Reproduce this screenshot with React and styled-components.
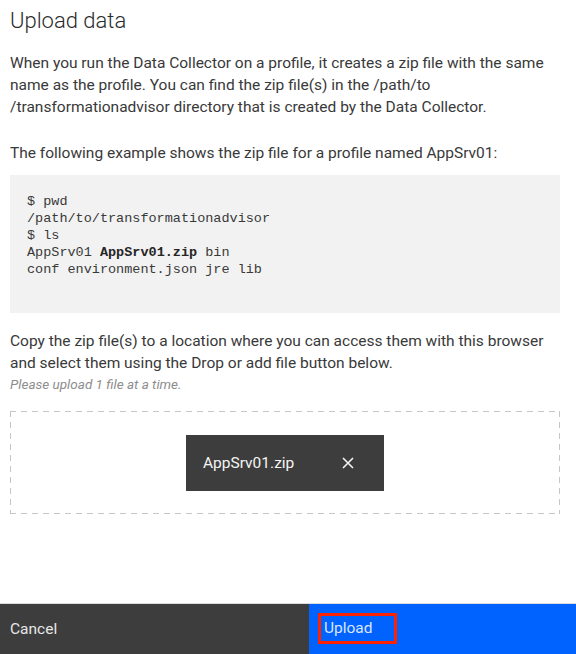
import React from "react";
import styled, { createGlobalStyle } from "styled-components";

const Global = createGlobalStyle`
  html, body { margin: 0; padding: 0; background: #fff; }
  body { font-family: "Roboto", "Noto Sans", sans-serif; color: #393939; }
  * { box-sizing: border-box; }
`;

const Page = styled.div`
  width: 576px;
  height: 654px;
  display: flex;
  flex-direction: column;
  background: #fff;
`;

const Content = styled.div`
  flex: 1;
  padding: 7px 16px 0 10px;
  display: flex;
  flex-direction: column;
`;

const Title = styled.h2`
  margin: 0;
  font-size: 22px;
  line-height: 28px;
  font-weight: 300;
  color: #2b2b2b;
`;

const Para = styled.p`
  margin: ${(p) => p.$mt || 0}px 0 0;
  font-size: 15.5px;
  line-height: 22px;
  font-weight: 400;
  color: #393939;
`;

const Note = styled.p`
  margin: 0;
  font-size: 13.5px;
  line-height: 20px;
  font-style: italic;
  color: #8d8d8d;
`;

const CodeBlock = styled.pre`
  margin: 11px 0 0;
  width: 550px;
  height: 138px;
  padding: 18px 17px 0;
  background: #f2f2f2;
  font-family: "Liberation Mono", "DejaVu Sans Mono", monospace;
  font-size: 13.5px;
  line-height: 17px;
  color: #393939;
`;

const CodeLine = styled.span`
  display: block;
`;

const Bold = styled.b`
  font-weight: 700;
  color: #262626;
`;

const DropZone = styled.div`
  margin-top: 17px;
  width: 550px;
  height: 103px;
  display: flex;
  align-items: center;
  justify-content: center;
  background-image:
    repeating-linear-gradient(90deg, #c6c6c6 0 6px, transparent 6px 11px),
    repeating-linear-gradient(90deg, #c6c6c6 0 6px, transparent 6px 11px),
    repeating-linear-gradient(180deg, #c6c6c6 0 6px, transparent 6px 11px),
    repeating-linear-gradient(180deg, #c6c6c6 0 6px, transparent 6px 11px);
  background-size: 100% 1px, 100% 1px, 1px 100%, 1px 100%;
  background-position: 0 0, 0 100%, 0 0, 100% 0;
  background-repeat: no-repeat;
`;

const FileChip = styled.div`
  width: 198px;
  height: 56px;
  background: #3d3d3d;
  display: flex;
  align-items: center;
  justify-content: space-between;
  padding: 0 29px 0 17px;
  color: #f4f4f4;
  font-size: 15.5px;
`;

const CloseBtn = styled.button`
  border: 0;
  background: transparent;
  padding: 0;
  width: 14px;
  height: 14px;
  display: flex;
  color: #f4f4f4;
  cursor: pointer;
`;

const Footer = styled.div`
  height: 51px;
  display: flex;
  border-top: 1px solid #dcdcdc;
`;

const FooterButton = styled.button`
  flex: ${(p) => (p.$primary ? "0 0 267px" : "1")};
  border: 0;
  margin: 0;
  background: ${(p) => (p.$primary ? "#0062ff" : "#3d3d3d")};
  color: ${(p) => (p.$primary ? "#dbe6ff" : "#e6e6e6")};
  font-family: "Roboto", "Noto Sans", sans-serif;
  font-size: 15.5px;
  text-align: left;
  padding: 0 10px;
  display: flex;
  align-items: center;
  cursor: pointer;
`;

const FocusLabel = styled.span`
  display: inline-flex;
  align-items: center;
  height: 31px;
  padding: 0 21px 0 3px;
  margin-left: -1px;
  margin-top: -2px;
  border: 3px solid #ff2200;
`;

export default function App() {
  return (
    <Page>
      <Global />
      <Content>
        <Title>Upload data</Title>
        <Para $mt={17}>
          When you run the Data Collector on a profile, it creates a zip file with the same
          name as the profile. You can find the zip file(s) in the /path/to
          /transformationadvisor directory that is created by the Data Collector.
        </Para>
        <Para $mt={24}>The following example shows the zip file for a profile named AppSrv01:</Para>
        <CodeBlock>
          <CodeLine>$ pwd</CodeLine>
          <CodeLine>/path/to/transformationadvisor</CodeLine>
          <CodeLine>$ ls</CodeLine>
          <CodeLine>
            AppSrv01 <Bold>AppSrv01.zip</Bold> bin
          </CodeLine>
          <CodeLine>conf environment.json jre lib</CodeLine>
        </CodeBlock>
        <Para $mt={17}>
          Copy the zip file(s) to a location where you can access them with this browser
          and select them using the Drop or add file button below.
        </Para>
        <Note>Please upload 1 file at a time.</Note>
        <DropZone>
          <FileChip>
            <span>AppSrv01.zip</span>
            <CloseBtn aria-label="Remove file">
              <svg width="14" height="14" viewBox="0 0 14 14">
                <path d="M2 2 L12 12 M12 2 L2 12" stroke="currentColor" strokeWidth="1.6" />
              </svg>
            </CloseBtn>
          </FileChip>
        </DropZone>
      </Content>
      <Footer>
        <FooterButton>Cancel</FooterButton>
        <FooterButton $primary>
          <FocusLabel>Upload</FocusLabel>
        </FooterButton>
      </Footer>
    </Page>
  );
}
